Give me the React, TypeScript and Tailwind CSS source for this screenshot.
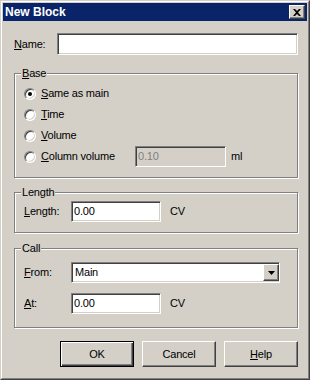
import type { ReactNode } from 'react';

const raised =
  'border border-t-white border-l-white border-r-[#404040] border-b-[#404040] shadow-[inset_-1px_-1px_0_#808080]';
const sunken =
  'border border-t-[#808080] border-l-[#808080] border-r-white border-b-white shadow-[inset_1px_1px_0_#404040,inset_-1px_-1px_0_#d4d0c8]';

function Key({ children }: { children: ReactNode }) {
  return <span className="underline underline-offset-[1px]">{children}</span>;
}

function Group({ title, className, children }: { title: ReactNode; className?: string; children: ReactNode }) {
  return (
    <div
      className={`relative border border-[#808080] shadow-[inset_1px_1px_0_#fff,1px_1px_0_#fff] ${className ?? ''}`}
    >
      <span className="absolute -top-[8px] left-[6px] bg-[#d4d0c8] px-px leading-[14px]">{title}</span>
      {children}
    </div>
  );
}

function Radio({ checked }: { checked?: boolean }) {
  return (
    <span className={`flex h-[12px] w-[12px] shrink-0 items-center justify-center rounded-full bg-white ${sunken}`}>
      {checked && <span className="h-[4px] w-[4px] rounded-full bg-black" />}
    </span>
  );
}

function RadioRow({ checked, label }: { checked?: boolean; label: ReactNode }) {
  return (
    <div className="flex h-[21px] items-center gap-[5px]">
      <Radio checked={checked} />
      <span>{label}</span>
    </div>
  );
}

function Field({ value, className }: { value: string; className?: string }) {
  return (
    <div className={`flex h-[21px] items-center bg-white pl-[2px] ${sunken} ${className ?? ''}`}>{value}</div>
  );
}

export default function App() {
  return (
    <div className="h-[380px] w-[310px] border border-t-[#d4d0c8] border-l-[#d4d0c8] border-r-[#404040] border-b-[#404040] bg-[#d4d0c8] font-['Liberation_Sans',Arial,sans-serif] text-[11px] tracking-[-0.2px] text-black">
      <div className="flex h-full flex-col border border-t-white border-l-white border-r-[#808080] border-b-[#808080] p-px">
        {/* Title bar */}
        <div className="flex h-[18px] shrink-0 items-center justify-between bg-[#0a246a] pl-[2px] pr-[2px]">
          <span className="text-[12px] font-bold tracking-normal text-white">New Block</span>
          <button className={`flex h-[14px] w-[16px] items-center justify-center bg-[#d4d0c8] ${raised}`}>
            <svg width="8" height="7" viewBox="0 0 8 7">
              <path d="M0 0h2l2 2 2-2h2L5 3.5 8 7H6L4 5 2 7H0l3-3.5z" fill="#000" />
            </svg>
          </button>
        </div>

        {/* Body */}
        <div className="flex flex-1 flex-col pl-[11px] pr-[9px]">
          <div className="mt-[12px] flex items-center">
            <span className="w-[43px]">
              <Key>N</Key>ame:
            </span>
            <div className={`h-[22px] flex-1 bg-white ${sunken}`} />
          </div>

          <Group
            className="mt-[18px] pb-[10px] pl-[9px] pt-[9px]"
            title={
              <>
                <Key>B</Key>ase
              </>
            }
          >
            <RadioRow
              checked
              label={
                <>
                  <Key>S</Key>ame as main
                </>
              }
            />
            <RadioRow
              label={
                <>
                  <Key>T</Key>ime
                </>
              }
            />
            <RadioRow
              label={
                <>
                  <Key>V</Key>olume
                </>
              }
            />
            <div className="flex items-center">
              <div className="w-[111px]">
                <RadioRow
                  label={
                    <>
                      <Key>C</Key>olumn volume
                    </>
                  }
                />
              </div>
              <div
                className={`flex h-[21px] w-[91px] items-center bg-[#d4d0c8] pl-[2px] text-[#808080] ${sunken}`}
              >
                0.10
              </div>
              <span className="ml-[5px]">ml</span>
            </div>
          </Group>

          <Group className="mt-[14px] pb-[10px] pl-[9px] pt-[8px]" title="Length">
            <div className="flex items-center">
              <span className="w-[47px]">
                <Key>L</Key>ength:
              </span>
              <Field value="0.00" className="w-[90px]" />
              <span className="ml-[9px]">CV</span>
            </div>
          </Group>

          <Group className="mt-[15px] pb-[13px] pl-[9px] pt-[13px]" title="Call">
            <div className="flex items-center">
              <span className="w-[47px]">
                <Key>F</Key>rom:
              </span>
              <div className={`flex h-[21px] w-[209px] items-center bg-white pl-[3px] ${sunken}`}>
                <span className="flex-1">Main</span>
                <span className={`flex h-[17px] w-[16px] items-center justify-center bg-[#d4d0c8] ${raised}`}>
                  <svg width="7" height="4" viewBox="0 0 7 4">
                    <path d="M0 0h7L3.5 4z" fill="#000" />
                  </svg>
                </span>
              </div>
            </div>
            <div className="mt-[10px] flex items-center">
              <span className="w-[47px]">
                <Key>A</Key>t:
              </span>
              <Field value="0.00" className="w-[90px]" />
              <span className="ml-[9px]">CV</span>
            </div>
          </Group>

          <div className="mt-[13px] flex justify-end gap-[8px]">
            <button className="h-[26px] w-[74px] border border-black bg-[#d4d0c8] shadow-[inset_1px_1px_0_#fff,inset_-1px_-1px_0_#404040,inset_-2px_-2px_0_#808080]">
              OK
            </button>
            <button className={`h-[26px] w-[74px] bg-[#d4d0c8] ${raised}`}>Cancel</button>
            <button className={`h-[26px] w-[74px] bg-[#d4d0c8] ${raised}`}>
              <Key>H</Key>elp
            </button>
          </div>
        </div>
      </div>
    </div>
  );
}
